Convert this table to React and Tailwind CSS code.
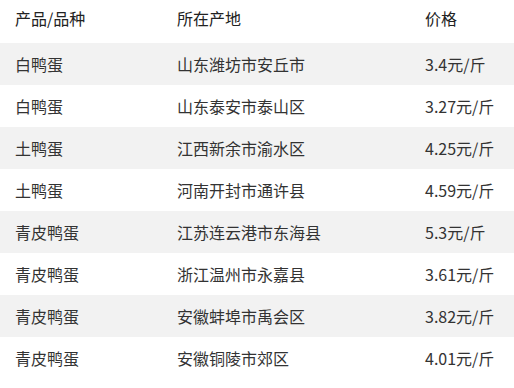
const rows = [
  ['白鸭蛋', '山东潍坊市安丘市', '3.4元/斤'],
  ['白鸭蛋', '山东泰安市泰山区', '3.27元/斤'],
  ['土鸭蛋', '江西新余市渝水区', '4.25元/斤'],
  ['土鸭蛋', '河南开封市通许县', '4.59元/斤'],
  ['青皮鸭蛋', '江苏连云港市东海县', '5.3元/斤'],
  ['青皮鸭蛋', '浙江温州市永嘉县', '3.61元/斤'],
  ['青皮鸭蛋', '安徽蚌埠市禹会区', '3.82元/斤'],
  ['青皮鸭蛋', '安徽铜陵市郊区', '4.01元/斤'],
]

export default function App() {
  return (
    <div className="w-[514px] h-[388px] bg-white text-[16px] text-[#333] font-['Noto_Sans_CJK_SC','Noto_Sans',sans-serif]">
      <div className="grid grid-cols-[162px_248px_1fr] pl-[15px] h-[43px] pt-[6px] items-start leading-[24px] text-[#222]">
        <div>产品/品种</div>
        <div>所在产地</div>
        <div>价格</div>
      </div>
      {rows.map((r, i) => (
        <div
          key={i}
          className={`grid grid-cols-[162px_248px_1fr] pl-[15px] h-[42px] items-center leading-[24px] ${i % 2 === 0 ? 'bg-[#f2f2f2]' : 'bg-white'}`}
        >
          <div>{r[0]}</div>
          <div>{r[1]}</div>
          <div>{r[2]}</div>
        </div>
      ))}
    </div>
  )
}
